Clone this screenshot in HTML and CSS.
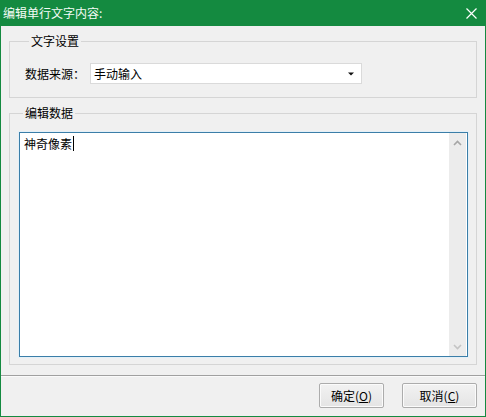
FILE: index.html
```html
<!DOCTYPE html>
<html lang="zh">
<head>
<meta charset="utf-8">
<title>编辑单行文字内容</title>
<link rel="stylesheet" href="styles.css">
</head>
<body>
<div class="window">
  <div class="titlebar">
    <span class="title">编辑单行文字内容:</span>
    <svg class="close" width="11" height="11" viewBox="0 0 11 11"><path d="M0.5 0.5 L10.5 10.5 M10.5 0.5 L0.5 10.5" stroke="#fff" stroke-width="1.2" fill="none"/></svg>
  </div>
  <div class="content">
    <fieldset class="group group-settings">
      <legend>文字设置</legend>
      <div class="row">
        <span class="label">数据来源：</span>
        <div class="combo">
          <span class="combo-text">手动输入</span>
          <svg class="combo-arrow" width="6" height="4" viewBox="0 0 6 4"><path d="M0 0.5 H6 L3 3.5 Z" fill="#111"/></svg>
        </div>
      </div>
    </fieldset>
    <fieldset class="group group-data">
      <legend>编辑数据</legend>
      <div class="editor">
        <div class="editor-text"><span>神奇像素</span><span class="caret"></span></div>
        <div class="scrollbar">
          <svg width="9" height="6" viewBox="0 0 9 6"><path d="M1 5 L4.5 1.5 L8 5" stroke="#a6a6a6" stroke-width="1.6" fill="none"/></svg>
          <svg width="9" height="6" viewBox="0 0 9 6"><path d="M1 1 L4.5 4.5 L8 1" stroke="#c4c4c4" stroke-width="1.6" fill="none"/></svg>
        </div>
      </div>
    </fieldset>
  </div>
  <div class="footer">
    <button class="btn btn-ok">确定(<u>O</u>)</button>
    <button class="btn btn-cancel">取消(<u>C</u>)</button>
  </div>
</div>
</body>
</html>
```

FILE: styles.css
```css
html, body {
  margin: 0;
  padding: 0;
}
body {
  width: 486px;
  height: 417px;
  font-family: "Noto Sans CJK SC", "Microsoft YaHei", sans-serif;
  font-size: 12px;
  color: #000;
  background: #f0f0f0;
}
.window {
  box-sizing: border-box;
  width: 486px;
  height: 417px;
  border: 1px solid #148a40;
  border-top: 0;
  display: flex;
  flex-direction: column;
  background: #f0f0f0;
}
.titlebar {
  height: 26px;
  flex: none;
  background: #148a40;
  display: flex;
  align-items: center;
  justify-content: space-between;
  padding: 0 9px 0 3px;
  margin: 0 -1px;
}
.title {
  color: #f4fbf6;
  font-size: 12px;
  line-height: 16px;
}
.close {
  display: block;
  margin-top: 1px;
}
.content {
  display: flex;
  flex-direction: column;
  padding: 7px 8px 0 8px;
  height: 349px;
  box-sizing: border-box;
  flex: none;
}
.group {
  margin: 0;
  border: 1px solid #d5d5d5;
  min-width: 0;
}
.group legend {
  padding: 0 2px;
  margin-left: 4px;
  line-height: 16px;
  height: 16px;
  font-size: 12px;
}
.group-settings {
  padding: 14px 0 13px 15px;
}
.group-data {
  margin-top: 7px;
  padding: 11px 8px 7px 9px;
}
.row {
  display: flex;
  align-items: center;
  height: 21px;
}
.label {
  width: 65px;
  line-height: 16px;
}
.combo {
  box-sizing: border-box;
  width: 272px;
  height: 21px;
  background: #fff;
  border: 1px solid #dadada;
  display: flex;
  align-items: center;
  justify-content: space-between;
  padding: 0 7px 0 3px;
}
.combo-text {
  line-height: 16px;
}
.combo-arrow {
  display: block;
}
.editor {
  box-sizing: border-box;
  height: 225px;
  background: #fff;
  border: 1px solid #3b7ea8;
  box-shadow: 0 0 0 1px #e3f0f8;
  display: flex;
}
.editor-text {
  flex: 1;
  padding: 3px 4px;
  line-height: 16px;
  display: flex;
  align-items: flex-start;
}
.caret {
  display: inline-block;
  width: 1px;
  height: 15px;
  background: #000;
  margin-left: 1px;
}
.scrollbar {
  width: 17px;
  background: #ececec;
  display: flex;
  flex-direction: column;
  justify-content: space-between;
  align-items: center;
  padding: 7px 0 6px;
  box-sizing: border-box;
  margin-right: 1px;
}
.scrollbar svg {
  display: block;
}
.footer {
  flex: 1;
  border-top: 1px solid #a0a0a0;
  box-shadow: inset 0 1px 0 #fafafa;
  display: flex;
  justify-content: flex-end;
  align-items: flex-start;
  gap: 18px;
  padding: 7px 8px 0 0;
}
.btn {
  box-sizing: border-box;
  height: 25px;
  border: 1px solid #acacac;
  border-radius: 2px;
  background: linear-gradient(#f2f2f2, #e4e4e4);
  box-shadow: inset 0 0 0 1px #fbfbfb;
  font-family: "Noto Sans CJK SC", "Microsoft YaHei", sans-serif;
  font-size: 12px;
  color: #000;
  padding: 0;
  line-height: 16px;
}
.btn-ok {
  width: 65px;
}
.btn-cancel {
  width: 75px;
}
```
